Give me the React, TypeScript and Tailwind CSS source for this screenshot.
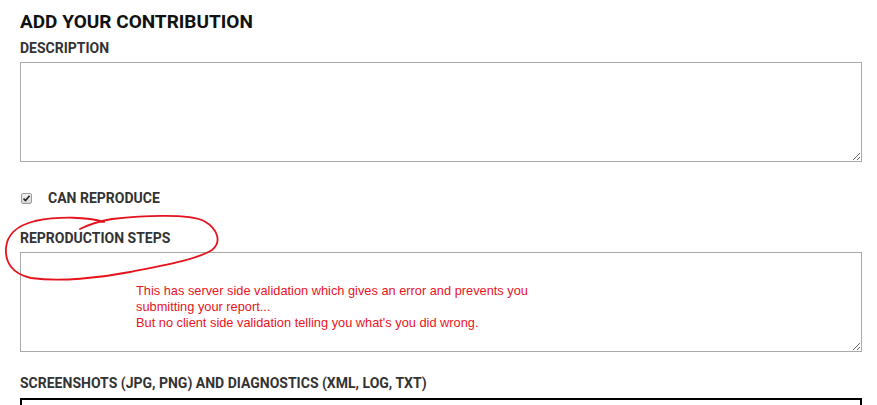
import React from "react";

const Label = ({ children, className = "" }: { children: React.ReactNode; className?: string }) => (
  <div className={"text-[14px] leading-[14px] font-bold text-[#333] " + className}>{children}</div>
);

const App = () => {
  return (
    <div className="relative h-[405px] overflow-hidden bg-white pl-5 font-['Roboto','Liberation_Sans',sans-serif]">
      <h1 className="pt-[12px] text-[19px] leading-[19px] font-bold text-[#111]">
        ADD YOUR CONTRIBUTION
      </h1>

      <Label className="mt-[10px]">DESCRIPTION</Label>
      <textarea
        name="description"
        className="mt-[7px] block h-[100px] w-[842px] border border-[#a9a9a9] bg-white focus:outline-none"
      ></textarea>

      {/* checkbox row */}
      <div className="mt-[29px] flex items-center">
        <span className="ml-px flex h-[11px] w-[11px] items-center justify-center rounded-[2px] border border-[#9a9a9a] bg-gradient-to-b from-[#f4f4f4] to-[#d8d8d8]">
          <svg width="9" height="9" viewBox="0 0 9 9">
            <path d="M1.5 4.6 L3.5 6.6 L7.6 1.8" fill="none" stroke="#2a2a2a" strokeWidth="1.7" />
          </svg>
        </span>
        <span className="ml-[16px] text-[14px] leading-[14px] font-bold text-[#333]">CAN REPRODUCE</span>
      </div>

      <Label className="mt-[26px]">REPRODUCTION STEPS</Label>
      <textarea
        name="steps"
        readOnly
        defaultValue={
          "This has server side validation which gives an error and prevents you\nsubmitting your report...\nBut no client side validation telling you what's you did wrong."
        }
        className="mt-[7px] block h-[100px] w-[842px] resize border border-[#a9a9a9] bg-white pt-[30px] pl-[115px] font-['Liberation_Sans',Arial,sans-serif] text-[12.8px] leading-[16px] text-[#e8141e] focus:outline-none"
      ></textarea>

      <Label className="mt-[24px]">SCREENSHOTS (JPG, PNG) AND DIAGNOSTICS (XML, LOG, TXT)</Label>
      <div className="mt-[8px] h-[40px] w-[842px] border-2 border-black"></div>

      {/* hand drawn annotation */}
      <svg
        className="pointer-events-none absolute top-0 left-0"
        width="877"
        height="405"
        viewBox="0 0 877 405"
      >
        <path
          d="M80 229 C90 224 100 221 112 219 C140 216 188 213 204 221 C218 229 222 242 212 250 C196 260 160 266 130 272 C100 278 60 282 31 278 C12 274 5 262 6 248 C7 235 15 226 35 221 C60 216 88 217 104 222"
          fill="none"
          stroke="#e5121c"
          strokeWidth="1.8"
          strokeLinecap="round"
        />
      </svg>
    </div>
  );
};

export default App;
